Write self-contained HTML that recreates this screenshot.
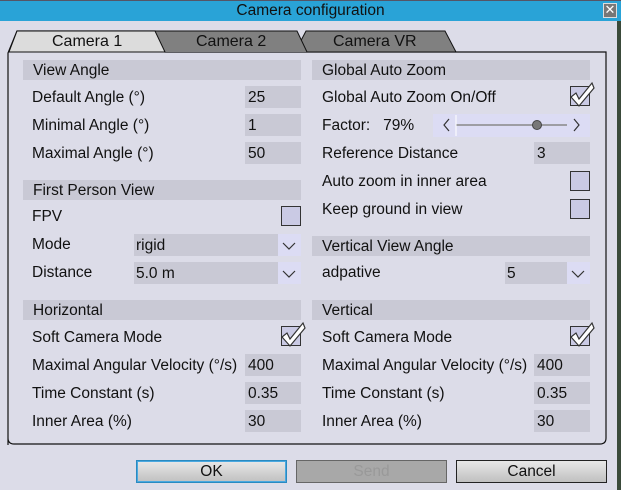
<!DOCTYPE html>
<html><head><meta charset="utf-8"><style>
*{margin:0;padding:0;box-sizing:border-box}
body{width:621px;height:490px;background:#dcdce8;font-family:"Liberation Sans",sans-serif;font-size:15.5px;color:#111;position:relative;overflow:hidden}
.a{position:absolute}
.t{position:absolute;line-height:18px;white-space:nowrap}
.h{position:absolute;height:20px;background:#c9c9d5;padding-left:10px;line-height:21px}
.in{position:absolute;height:22px;width:56px;background:#c9c9d5;padding-left:3px;line-height:23px}
.cb{position:absolute;width:20px;height:20px;border:1px solid #333;background:#cacae4}
.dd{position:absolute;height:22px;background:#c9c9d5;line-height:23px;padding-left:2px}
.dd .ar{position:absolute;right:0;top:0;width:23px;height:22px;background:#dcdcf4}
.btn{position:absolute;top:460px;height:23px;width:151px;border:1px solid #222;background:linear-gradient(#e8e8e8,#c0c0c0);text-align:center;line-height:21px;font-size:15.5px}
</style></head><body>
<div class="a" style="left:0;top:0;width:621px;height:1px;background:#556"></div>
<div class="a" style="left:0;top:1px;width:621px;height:20px;background:#29a3d7;text-align:center;line-height:20px;font-size:15.5px;color:#111">Camera configuration</div>
<div class="a" style="left:603px;top:3px;width:14px;height:15px;background:#777;border:1px solid #ddd;color:#fff;font-size:13px;line-height:12px;text-align:center">✕</div>
<div class="a" style="left:617px;top:21px;width:4px;height:469px;background:#3a4a3a"></div>
<svg class="a" style="left:0;top:28px" width="621" height="420">
<path d="M8 417 L8 25 L17 3 L155 3 L165 24 L606 24 L606 410 Q606 416 600 416 L14 416 Q8 416 8 410" fill="none" stroke="#111" stroke-width="1.2"/>
<path d="M295 24 L306 3 L445 3 L456 24 Z" fill="#808080" stroke="#111"/>
<path d="M158 24 L155 3 L155 3 L297 3 L307 24 Z" fill="#808080"/>
<path d="M155 3 L297 3 L307 24 M158 24 L152 10" fill="none" stroke="#111"/>
<path d="M9 24 L17 3 L155 3 L165 24 Z" fill="#dcdcdc" stroke="#111"/>
</svg>
<div class="t" style="left:52px;top:33px;font-size:16px">Camera 1</div>
<div class="t" style="left:196px;top:33px;font-size:16px">Camera 2</div>
<div class="t" style="left:333px;top:33px;font-size:16px">Camera VR</div>

<div class="h" style="left:23px;top:60px;width:278px">View Angle</div>
<div class="t" style="left:32px;top:89px">Default Angle (°)</div><div class="in" style="left:245px;top:86px">25</div>
<div class="t" style="left:32px;top:117px">Minimal Angle (°)</div><div class="in" style="left:245px;top:114px">1</div>
<div class="t" style="left:32px;top:145px">Maximal Angle (°)</div><div class="in" style="left:245px;top:142px">50</div>
<div class="h" style="left:23px;top:180px;width:278px">First Person View</div>
<div class="t" style="left:32px;top:208px">FPV</div><div class="cb" style="left:281px;top:206px"></div>
<div class="t" style="left:32px;top:236px">Mode</div><div class="dd" style="left:134px;top:234px;width:167px">rigid<div class="ar"></div></div>
<div class="t" style="left:32px;top:264px">Distance</div><div class="dd" style="left:134px;top:262px;width:167px">5.0 m<div class="ar"></div></div>
<div class="h" style="left:23px;top:300px;width:278px">Horizontal</div>
<div class="t" style="left:32px;top:329px">Soft Camera Mode</div><div class="cb" style="left:281px;top:326px"></div>
<div class="t" style="left:32px;top:357px">Maximal Angular Velocity (°/s)</div><div class="in" style="left:245px;top:354px">400</div>
<div class="t" style="left:32px;top:385px">Time Constant (s)</div><div class="in" style="left:245px;top:382px">0.35</div>
<div class="t" style="left:32px;top:413px">Inner Area (%)</div><div class="in" style="left:245px;top:410px">30</div>

<div class="h" style="left:312px;top:60px;width:278px">Global Auto Zoom</div>
<div class="t" style="left:322px;top:89px">Global Auto Zoom On/Off</div><div class="cb" style="left:570px;top:86px"></div>
<div class="t" style="left:322px;top:117px">Factor:&nbsp;&nbsp; 79%</div>
<div class="a" style="left:433px;top:114px;width:157px;height:23px;background:#dcdcf4"></div>
<div class="t" style="left:322px;top:145px">Reference Distance</div><div class="in" style="left:534px;top:142px">3</div>
<div class="t" style="left:322px;top:173px">Auto zoom in inner area</div><div class="cb" style="left:570px;top:171px"></div>
<div class="t" style="left:322px;top:201px">Keep ground in view</div><div class="cb" style="left:570px;top:199px"></div>
<div class="h" style="left:312px;top:236px;width:278px">Vertical View Angle</div>
<div class="t" style="left:322px;top:264px">adpative</div><div class="dd" style="left:505px;top:262px;width:85px">5<div class="ar"></div></div>
<div class="h" style="left:312px;top:300px;width:278px">Vertical</div>
<div class="t" style="left:322px;top:329px">Soft Camera Mode</div><div class="cb" style="left:570px;top:326px"></div>
<div class="t" style="left:322px;top:357px">Maximal Angular Velocity (°/s)</div><div class="in" style="left:534px;top:354px">400</div>
<div class="t" style="left:322px;top:385px">Time Constant (s)</div><div class="in" style="left:534px;top:382px">0.35</div>
<div class="t" style="left:322px;top:413px">Inner Area (%)</div><div class="in" style="left:534px;top:410px">30</div>

<svg class="a" style="left:0;top:0" width="621" height="490">
<g fill="none" stroke="#333" stroke-width="1.2">
<path d="M283 243 L289 249 L295 243"/><path d="M283 271 L289 277 L295 271"/><path d="M572 271 L578 277 L584 271"/>
<path d="M449 119 L444 125 L449 131"/><path d="M574 119 L579 125 L574 131"/>
</g>
<line x1="456" y1="125" x2="567" y2="125" stroke="#888" stroke-width="1.5"/>
<line x1="456" y1="115" x2="456" y2="136" stroke="#fff"/>
<circle cx="537" cy="125" r="4.5" fill="#777" stroke="#444"/>
<g fill="#fff" stroke="#333" stroke-width="1.2">
<path d="M571 97 L576 93 L579 99 L592 83 L594 88 L579 106 Z"/>
<path d="M282 337 L287 333 L290 339 L303 323 L305 328 L290 346 Z"/>
<path d="M571 337 L576 333 L579 339 L592 323 L594 328 L579 346 Z"/>
</g>
</svg>

<div class="btn" style="left:136px;border-color:#2a8ac0;box-shadow:0 0 0 1px #4aa8e0 inset">OK</div>
<div class="btn" style="left:296px;background:#a8a8a8;border-color:#666;color:#999">Send</div>
<div class="btn" style="left:456px">Cancel</div>
</body></html>
